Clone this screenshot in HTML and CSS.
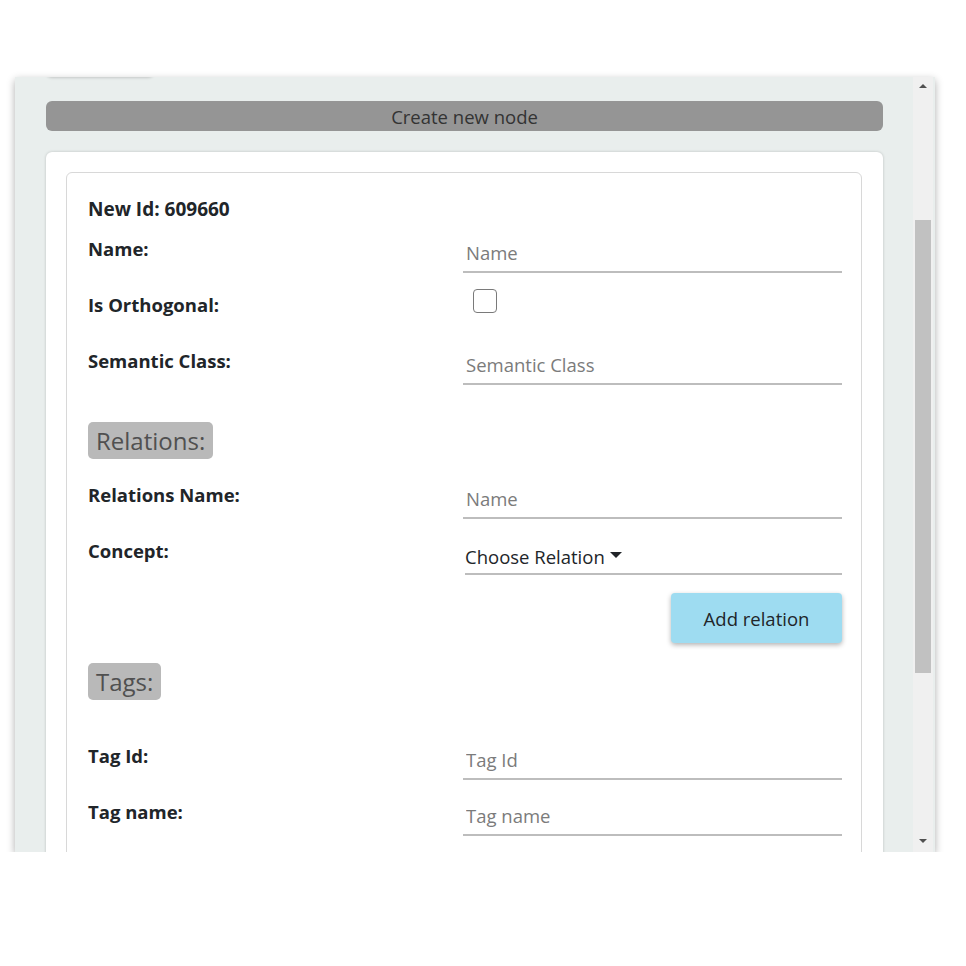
FILE: index.html
```html
<!DOCTYPE html>
<html>
<head>
<meta charset="utf-8">
<link rel="stylesheet" href="styles.css">
</head>
<body>
<div class="panel">
  <div class="viewport">
    <div class="prev-card"></div>
    <div class="create-bar">Create new node</div>
    <div class="card">
      <div class="form-box">
        <div class="new-id">New Id: 609660</div>
        <div class="row">
          <label class="lbl">Name:</label>
          <input class="field" type="text" placeholder="Name">
        </div>
        <div class="row">
          <label class="lbl">Is Orthogonal:</label>
          <div><input class="check" type="checkbox"></div>
        </div>
        <div class="row">
          <label class="lbl">Semantic Class:</label>
          <input class="field" type="text" placeholder="Semantic Class">
        </div>
        <div class="section sec-relations"><span class="badge">Relations:</span></div>
        <div class="row">
          <label class="lbl">Relations Name:</label>
          <input class="field" type="text" placeholder="Name">
        </div>
        <div class="row row-concept">
          <label class="lbl">Concept:</label>
          <div class="dropdown">Choose Relation <span class="caret"></span></div>
        </div>
        <div class="btn-row"><button class="btn-add">Add relation</button></div>
        <div class="section sec-tags"><span class="badge">Tags:</span></div>
        <div class="row">
          <label class="lbl">Tag Id:</label>
          <input class="field" type="text" placeholder="Tag Id">
        </div>
        <div class="row">
          <label class="lbl">Tag name:</label>
          <input class="field" type="text" placeholder="Tag name">
        </div>
      </div>
    </div>
  </div>
  <div class="scrollbar">
    <div class="sb-btn"><span class="tri-up"></span></div>
    <div class="track"><div class="thumb"></div></div>
    <div class="sb-btn"><span class="tri-down"></span></div>
  </div>
</div>
</body>
</html>
```
FILE: styles.css
```css
* { box-sizing: border-box; }
html, body { margin: 0; padding: 0; background: #ffffff; }
body {
  font-family: "Open Sans", "Noto Sans", sans-serif;
  color: #212529;
}
.panel {
  display: flex;
  margin: 77px 0 0 15px;
  width: 920px;
  height: 775px;
  background: #e9eeed;
  box-shadow: 0 3px 8px rgba(0,0,0,0.32);
  padding-right: 2px;
}
.viewport {
  flex: 1;
  overflow: hidden;
  padding: 0 30px 0 31px;
}
.prev-card {
  width: 108px;
  height: 6px;
  margin-top: -6px;
  background: #e9eeed;
  border-radius: 0 0 6px 6px;
  box-shadow: 0 1px 3px rgba(0,0,0,0.16);
}
.create-bar {
  margin-top: 24px;
  height: 30px;
  line-height: 32px;
  background: #959595;
  border-radius: 6px;
  text-align: center;
  font-size: 18.5px;
  color: #333333;
}
.card {
  margin-top: 21px;
  background: #ffffff;
  border-radius: 6px;
  padding: 20px 21px 0 20px;
  box-shadow: 0 0 3px rgba(0,0,0,0.2);
  height: 740px;
}
.form-box {
  border: 1px solid #d8d8d8;
  border-radius: 6px;
  padding: 24px 19px 40px 21px;
  height: 760px;
}
.new-id {
  font-weight: 700;
  font-size: 19px;
  line-height: 24px;
  margin-bottom: 16px;
}
.row {
  display: grid;
  grid-template-columns: 375px 1fr;
  align-items: start;
  height: 36px;
  margin-bottom: 20px;
}
.lbl {
  font-weight: 700;
  font-size: 18.5px;
  line-height: 24px;
}
.field {
  width: 100%;
  height: 36px;
  border: none;
  border-bottom: 2px solid #bdbdbd;
  padding: 0 3px 4px 3px;
  font-family: "Open Sans", "Noto Sans", sans-serif;
  font-size: 18.5px;
  color: #212529;
  background: transparent;
  outline: none;
}
.field::placeholder { color: #7b7b7b; }
.check {
  -webkit-appearance: none;
  appearance: none;
  width: 24px;
  height: 24px;
  margin: -4px 0 0 10px;
  border: 1.5px solid #7a7a7a;
  border-radius: 4px;
  background: #ffffff;
  display: block;
}
.section { line-height: 0; }
.sec-relations { margin: 37px 0 24px; }
.sec-tags { margin: 0 0 44px; }
.badge {
  display: inline-block;
  background: #b9b9b9;
  color: #505050;
  font-size: 24px;
  line-height: 38px;
  height: 37px;
  padding: 0 8px;
  border-radius: 5px;
}
.row-concept { margin-bottom: 18px; }
.dropdown {
  margin-left: 2px;
  height: 36px;
  border-bottom: 2px solid #bdbdbd;
  font-size: 18.5px;
  line-height: 32px;
  padding-top: 1px;
  color: #212529;
  display: flex;
  align-items: center;
  gap: 5px;
}
.caret {
  width: 0;
  height: 0;
  border-left: 6px solid transparent;
  border-right: 6px solid transparent;
  border-top: 6px solid #212529;
  margin-top: -3px;
}
.btn-row {
  display: flex;
  justify-content: flex-end;
  margin-bottom: 20px;
}
.btn-add {
  width: 171px;
  height: 50px;
  border: none;
  border-radius: 4px;
  background: #9edcf1;
  box-shadow: 0 2px 5px rgba(0,0,0,0.3);
  font-family: "Open Sans", "Noto Sans", sans-serif;
  font-size: 18.5px;
  color: #212529;
  padding: 0;
}
.scrollbar {
  width: 20px;
  background: #f0f0f0;
  display: flex;
  flex-direction: column;
}
.sb-btn {
  height: 17px;
  display: flex;
  align-items: center;
  justify-content: center;
}
.tri-up, .tri-down {
  width: 0;
  height: 0;
  border-left: 4px solid transparent;
  border-right: 4px solid transparent;
}
.tri-up { border-bottom: 4px solid #505050; margin-top: 1px; }
.tri-down { border-top: 4px solid #505050; margin-bottom: 5px; }
.track { flex: 1; padding: 126px 2px 0 2px; }
.thumb { height: 453px; background: #c1c1c1; }
```
